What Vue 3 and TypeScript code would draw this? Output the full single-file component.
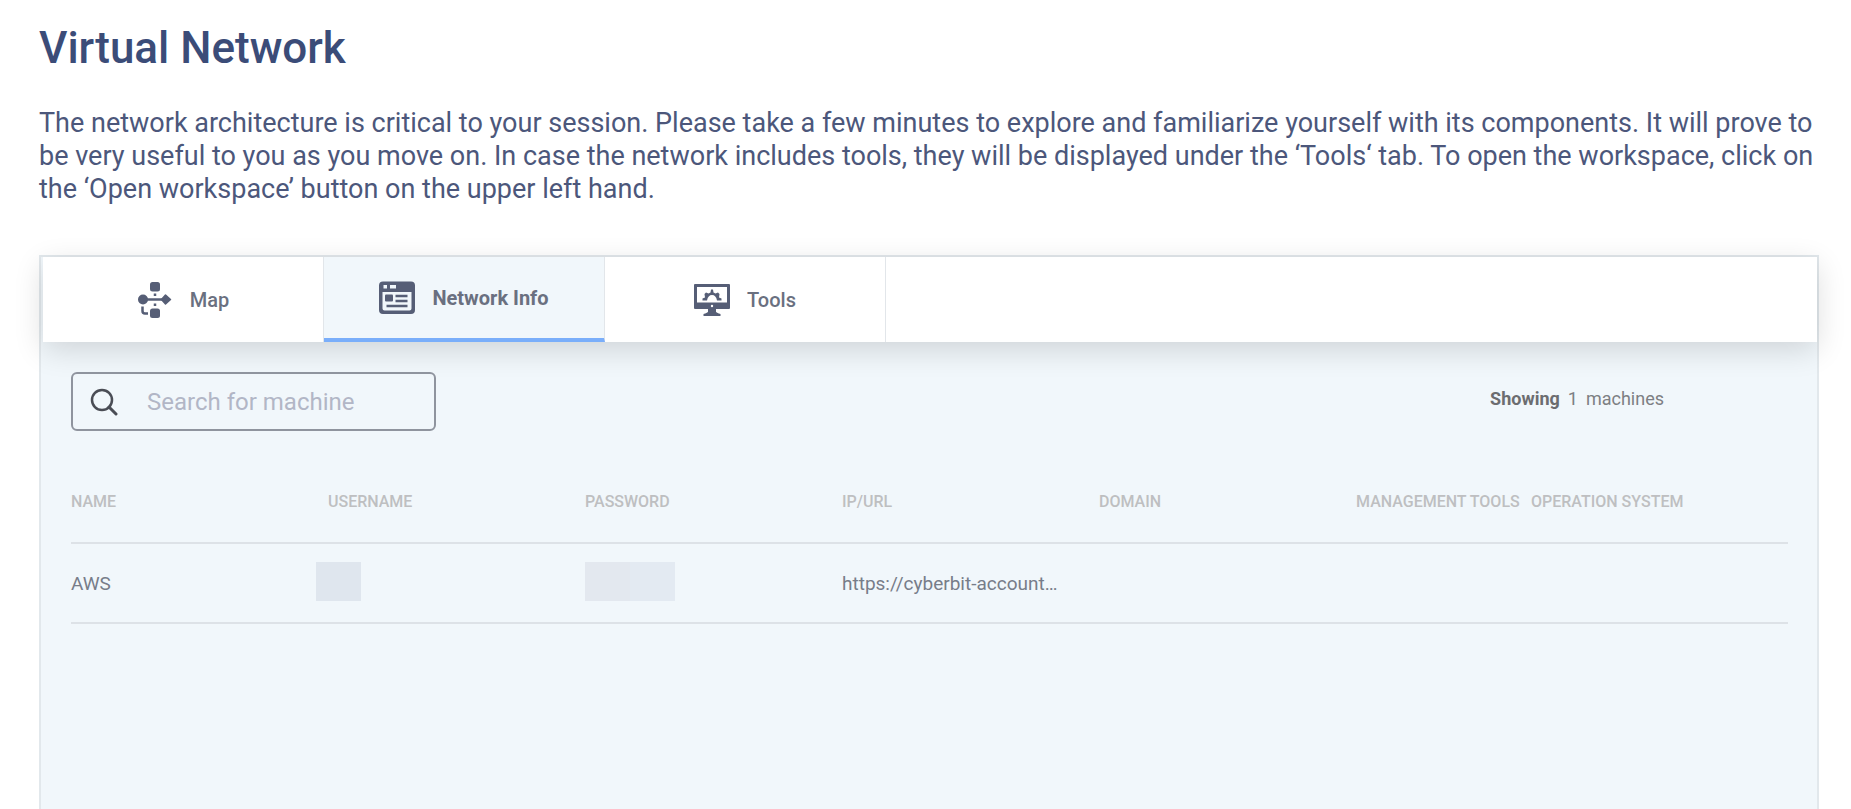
<script setup lang="ts">
import { computed, ref } from 'vue'

interface Machine {
  name: string
  url: string
}

type TabId = 'map' | 'info' | 'tools'

const tabs: { id: TabId; label: string }[] = [
  { id: 'map', label: 'Map' },
  { id: 'info', label: 'Network Info' },
  { id: 'tools', label: 'Tools' },
]
const activeTab = ref<TabId>('info')

const columns = ['Name', 'Username', 'Password', 'IP/URL', 'Domain', 'Management Tools', 'Operation System']
const machines: Machine[] = [{ name: 'AWS', url: 'https://cyberbit-account…' }]

const query = ref('')
const visible = computed(() =>
  machines.filter((m) => m.name.toLowerCase().includes(query.value.trim().toLowerCase())),
)
</script>

<template>
  <main class="page">
    <h1 class="title">Virtual Network</h1>
    <p class="intro">
      The network architecture is critical to your session. Please take a few minutes to explore and familiarize
      yourself with its components. It will prove to be very useful to you as you move on. In case the network includes
      tools, they will be displayed under the ‘Tools‘ tab. To open the workspace, click on the ‘Open workspace’ button
      on the upper left hand.
    </p>

    <section class="panel">
      <div class="tabs" role="tablist">
        <button
          v-for="tab in tabs"
          :key="tab.id"
          type="button"
          role="tab"
          class="tab"
          :class="{ active: tab.id === activeTab }"
          :aria-selected="tab.id === activeTab"
          @click="activeTab = tab.id"
        >
          <svg v-if="tab.id === 'map'" class="icon" viewBox="0 0 36 36" aria-hidden="true">
            <rect x="13" y="0" width="10" height="9.500" rx="2.5" />
            <rect x="13" y="26.500" width="10" height="9.500" rx="2.5" />
            <circle cx="6" cy="17.500" r="5" />
            <path
              d="M28.500 13L33.500 17.500L28.500 22L24.500 17.500Z"
              stroke="#565e76"
              stroke-width="1.500"
              stroke-linejoin="round"
            />
            <path class="line" d="M6 17.500H29" stroke-width="2.500" />
            <path class="line" d="M18 11.500V14M18 21.500V24" stroke-width="2.500" />
            <path class="line" d="M5.500 24.500V29Q5.500 31.500 8 31.500H11" stroke-width="2.500" />
          </svg>
          <svg v-else-if="tab.id === 'info'" class="icon" viewBox="0 0 36 36" aria-hidden="true">
            <path
              fill-rule="evenodd"
              d="M4 1.500H32Q36 1.500 36 5.500V30Q36 34 32 34H4Q0 34 0 30V5.500Q0 1.500 4 1.500ZM3.500 12V28.500Q3.500 30.500 5.500 30.500H30.500Q32.500 30.500 32.500 28.500V12ZM4.500 5V8.500H8V5ZM11 5V8.500H17V5Z"
            />
            <rect x="6" y="14.500" width="8" height="7" rx="1" />
            <path class="line" d="M16.500 16H28.500M16.500 21H28.500M7.500 26H28.500" stroke-width="2.500" />
          </svg>
          <svg v-else class="icon" viewBox="0 0 36 36" aria-hidden="true">
            <path
              fill-rule="evenodd"
              d="M1 2H35Q36 2 36 3V26Q36 27 35 27H22V30Q24 31.500 26.500 32V34H9.500V32Q12 31.500 14 30V27H1Q0 27 0 26V3Q0 2 1 2ZM3 5V20.500H33V5ZM16.800 24A1.200 1.200 0 1 0 19.200 24A1.200 1.200 0 1 0 16.800 24Z"
            />
            <path
              d="M8.500 18.500V16.500L11 15.500L10.500 12L12 10.500L14.500 11.500L16.500 10.500L17 7.500H19L19.500 10.500L21.500 11.500L24 10.500L25.500 12L25 15.500L27.500 16.500V18.500H23Q22 13 18 13Q14 13 13 18.500Z"
            />
          </svg>
          <span>{{ tab.label }}</span>
        </button>
      </div>

      <div class="content">
        <div class="toolbar">
          <label class="search">
            <svg class="search-icon" viewBox="0 0 28 28" aria-hidden="true">
              <circle cx="12" cy="12" r="10" />
              <path d="M19 19L26 26" stroke-linecap="round" stroke-width="3" />
            </svg>
            <input v-model="query" type="text" placeholder="Search for machine" aria-label="Search for machine" />
          </label>
          <p class="count">
            <strong>Showing</strong><span>{{ visible.length }}</span><span>machines</span>
          </p>
        </div>

        <table class="machines">
          <thead>
            <tr>
              <th v-for="column in columns" :key="column" scope="col">{{ column }}</th>
            </tr>
          </thead>
          <tbody>
            <tr v-for="machine in visible" :key="machine.name">
              <td>{{ machine.name }}</td>
              <td><span class="mask mask-user"></span></td>
              <td><span class="mask mask-pass"></span></td>
              <td>{{ machine.url }}</td>
              <td></td>
              <td></td>
              <td></td>
            </tr>
          </tbody>
        </table>
      </div>
    </section>
  </main>
</template>

<style>
body {
  background: #fff;
}
</style>

<style scoped>
.page {
  box-sizing: border-box;
  min-height: 100vh;
  display: flex;
  flex-direction: column;
  padding: 22px 32px 0 39px;
  font-family: Roboto, 'Liberation Sans', sans-serif;
  color: #4c577b;
}

.title {
  margin: 0;
  font-size: 44px;
  line-height: 52px;
  font-weight: 500;
  color: #3b4c78;
}

.intro {
  margin: 33px 0 49px;
  font-size: 27px;
  line-height: 33px;
}

.panel {
  flex: 1;
  display: flex;
  flex-direction: column;
  border: 2px solid #e2e8ec;
  border-bottom: 0;
  background: #f1f7fb;
}

.tabs {
  display: flex;
  height: 85px;
  margin-left: 2px;
  background: #fff;
  box-shadow: 0 8px 30px rgba(0, 0, 0, 0.14);
}

.tab {
  box-sizing: border-box;
  width: 281px;
  display: flex;
  align-items: center;
  justify-content: center;
  gap: 17px;
  padding: 0;
  border: 0;
  border-right: 1px solid #e2e6ea;
  background: none;
  font: 500 20px/24px Roboto, 'Liberation Sans', sans-serif;
  color: #6a7080;
  cursor: pointer;
}

.tab.active {
  border-bottom: 4px solid #7aaefa;
  background: #f1f7fb;
  font-weight: 700;
}

.icon {
  width: 36px;
  height: 36px;
  overflow: visible;
  fill: #565e76;
}

.line {
  fill: none;
  stroke: #565e76;
}

.content {
  padding: 30px 29px 0 30px;
}

.toolbar {
  display: flex;
  justify-content: space-between;
  align-items: flex-start;
}

.search {
  box-sizing: border-box;
  width: 365px;
  height: 59px;
  display: flex;
  align-items: center;
  gap: 29px;
  padding: 0 17px;
  border: 2px solid #8f949e;
  border-radius: 6px;
}

.search-icon {
  flex: none;
  width: 28px;
  height: 28px;
  fill: none;
  stroke: #4a4d55;
  stroke-width: 2.5;
}

.search input {
  flex: 1;
  min-width: 0;
  padding: 0;
  border: 0;
  outline: 0;
  background: transparent;
  font: 24px/28px Roboto, 'Liberation Sans', sans-serif;
  color: #565e76;
}

.search input::placeholder {
  color: #b2b6c6;
  opacity: 1;
}

.count {
  display: flex;
  gap: 8px;
  margin: 16px 124px 0 0;
  font-size: 18px;
  line-height: 22px;
  color: #7d7f83;
}

.count strong {
  font-weight: 700;
  color: #6c6d70;
}

.machines {
  width: 100%;
  margin-top: 28px;
  table-layout: fixed;
  border-collapse: collapse;
  text-align: left;
}

.machines th {
  width: 257px;
  height: 81px;
  padding: 2px 0 0;
  border-bottom: 2px solid #dde2e7;
  font-size: 16px;
  font-weight: 500;
  text-transform: uppercase;
  white-space: nowrap;
  color: #bebfc1;
}

.machines th:nth-child(6) {
  width: 175px;
}

.machines th:last-child {
  width: auto;
}

.machines td {
  height: 78px;
  padding: 0;
  border-bottom: 2px solid #dde2e7;
  font-size: 19px;
  white-space: nowrap;
  color: #777d89;
}

.mask {
  display: block;
  height: 39px;
  margin-bottom: 4px;
}

.mask-user {
  width: 45px;
  margin-left: -12px;
  background: #dfe6ee;
}

.mask-pass {
  width: 90px;
  background: linear-gradient(90deg, #e3e8ef 50%, #e3eaf2 50%);
}
</style>
